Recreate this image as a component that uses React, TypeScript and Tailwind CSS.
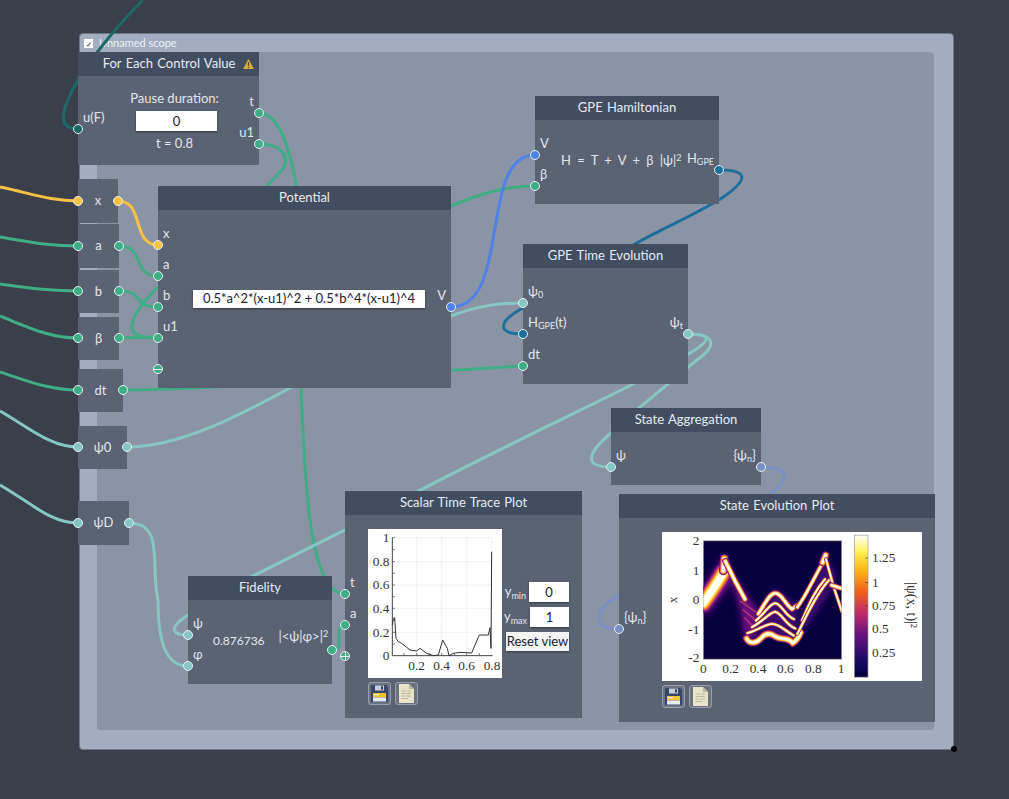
import type { ReactNode } from 'react'

const sans = "font-['Lato','Noto_Sans',sans-serif]"

const green = 'bg-[#3fae85]'
const teal = 'bg-[#84c7c3]'
const yellow = 'bg-[#f6c244]'
const blue = 'bg-[#4d82e8]'
const navy = 'bg-[#1d6f9e]'
const dark = 'bg-[#1c6a66]'
const lilac = 'bg-[#7a8fc8]'

const wires: { d: string; color: string }[] = [
  { color: '#1c6a66', d: 'M78 129 C62 129 60 118 68 100 C80 70 115 28 143 0' },
  { color: '#f6c244', d: 'M0 187 C30 193 50 201 78 201' },
  { color: '#f6c244', d: 'M118 201 C145 201 131 245 158 245' },
  { color: '#3fae85', d: 'M0 237 C30 242 50 246 78 246' },
  { color: '#3fae85', d: 'M0 284 C30 288 50 291 78 291' },
  { color: '#3fae85', d: 'M0 316 C30 328 50 338 78 338' },
  { color: '#3fae85', d: 'M0 372 C30 382 50 390 78 390' },
  { color: '#84c7c3', d: 'M0 411 C30 428 50 447 78 447' },
  { color: '#84c7c3', d: 'M0 485 C30 502 50 523 78 523' },
  { color: '#3fae85', d: 'M119 246 C146 246 131 276 158 276' },
  { color: '#3fae85', d: 'M119 291 C146 291 131 307 158 307' },
  { color: '#3fae85', d: 'M119 338 L158 337 L300 260 L451 206 C480 194 505 186 535 186' },
  { color: '#3fae85', d: 'M259 144 C280 144 292 156 282 170 L267 186 L157 288 C140 305 131 318 132 328 C133 336 145 338 158 338' },
  { color: '#3fae85', d: 'M259 113 C282 113 292 160 297 190 L301 388 C305 490 310 594 345 594' },
  { color: '#3fae85', d: 'M123 390 C230 390 400 372 523 366' },
  { color: '#84c7c3', d: 'M127 447 C180 447 240 415 290 388 L451 316 C480 305 500 303 523 303' },
  { color: '#4d82e8', d: 'M451 307 C512 307 478 155 535 155' },
  { color: '#1d6f9e', d: 'M719 170 C750 170 748 180 722 198 C700 212 660 230 635 244 L523 308 C497 322 497 334 523 334' },
  { color: '#84c7c3', d: 'M688 334 C712 334 712 340 690 353 C640 385 500 445 345 530 L253 576 L188 615 C165 630 175 635 188 635' },
  { color: '#84c7c3', d: 'M688 334 C715 334 718 345 697 360 C675 378 655 395 640 407 L611 433 C585 455 585 467 611 467' },
  { color: '#7a8fc8', d: 'M761 467 C790 467 790 480 770 494 L619 595 C592 612 592 629 619 629' },
  { color: '#84c7c3', d: 'M129 523 C165 523 150 566 158 600 C158 640 165 666 188 666' },
  { color: '#3fae85', d: 'M332 650 C342 650 338 644 339 635 C339 628 340 625 345 625' },
]

function Port({ className, label, right }: { className: string; label?: ReactNode; right?: boolean }) {
  return (
    <div className={`absolute z-20 h-[10px] w-[10px] -translate-x-1/2 -translate-y-1/2 rounded-full border border-[#e9eef2] ${className}`}>
      {label && (
        <span className={`absolute bottom-[8px] whitespace-nowrap text-[13px] leading-4 text-[#e2e6ec] ${right ? 'right-[9px]' : 'left-[9px]'}`}>
          {label}
        </span>
      )}
    </div>
  )
}

function Node({ className, title, children }: { className: string; title?: ReactNode; children?: ReactNode }) {
  return (
    <div className={`absolute z-10 flex flex-col bg-[#5b6373] text-[#e2e6ec] ${className}`}>
      {title && (
        <div className="flex h-[24px] shrink-0 items-center justify-center bg-[#424e60] text-[13px] text-[#e6eaf0] [word-spacing:1px]">
          {title}
        </div>
      )}
      {children}
    </div>
  )
}

function Sub({ children }: { children: ReactNode }) {
  return <sub className="text-[9px]">{children}</sub>
}

function SmallInput({ value, className }: { value: string; className: string }) {
  return (
    <input
      readOnly
      value={value}
      className={`bg-white text-center text-[13px] text-[#1c2130] shadow-[0_1px_2px_rgba(0,0,0,0.45)] outline-none ${className}`}
    />
  )
}

function IconButtons() {
  return (
    <div className="flex gap-[4px]">
      <div className="flex h-[23px] w-[23px] items-center justify-center rounded-[3px] border border-[#9a9fa8] bg-[#6a7181]">
        <svg width="17" height="17" viewBox="0 0 17 17">
          <path d="M0 0H15L17 2V17H0Z" fill="#39466b" />
          <rect x="4" y="0.5" width="9" height="5" fill="#c9d0dc" />
          <rect x="10" y="1.2" width="2" height="3.4" fill="#39466b" />
          <rect x="2" y="8" width="13" height="4.5" fill="#f2c232" />
          <rect x="3" y="9.2" width="5" height="1" fill="#fff" />
          <rect x="2" y="12.5" width="13" height="4" fill="#e8ebef" />
        </svg>
      </div>
      <div className="flex h-[23px] w-[23px] items-center justify-center rounded-[3px] border border-[#9a9fa8] bg-[#6a7181]">
        <svg width="15" height="19" viewBox="0 0 15 19">
          <path d="M0 0H10L15 5V19H0Z" fill="#e8e4c9" />
          <path d="M10 0L15 5H10Z" fill="#b7b49c" />
          <path d="M2.5 7H7M8 7H12M2.5 9.5H12M2.5 12H6M7 12H12M2.5 14.5H9" stroke="#a9a68f" strokeWidth="0.7" />
        </svg>
      </div>
    </div>
  )
}

function TracePlot() {
  const trace =
    '97,300 100,280 104,278 108,340 115,350 125,355 150,375 170,378 180,370 200,385 220,392 235,390 248,345 262,370 267,392 280,385 300,382 335,384 345,360 358,330 385,330 390,308 393,370 395,80'
  return (
    <svg width="134" height="149" viewBox="24 12 402 447" className="block bg-white">
      <g stroke="#c4c7cc" strokeWidth="2" strokeDasharray="2 4">
        {[170, 245, 320, 395].map((x) => <line key={x} x1={x} x2={x} y1="38" y2="392" />)}
        {[38, 110, 180, 250, 322].map((y) => <line key={y} x1="97" x2="395" y1={y} y2={y} />)}
      </g>
      <path d="M97 38V392H398" fill="none" stroke="#444" strokeWidth="3" />
      <g stroke="#444" strokeWidth="2">
        {[38, 74, 110, 145, 180, 215, 250, 286, 322, 357].map((y) => <line key={y} x1="97" x2="105" y1={y} y2={y} />)}
        {[132, 170, 208, 245, 283, 320, 358].map((x) => <line key={x} x1={x} x2={x} y1="392" y2="384" />)}
      </g>
      <polyline points={trace} fill="none" stroke="#333" strokeWidth="3" />
      <g fontFamily="'Liberation Serif', serif" fontSize="40" fill="#333" textAnchor="end">
        <text x="88" y="50">1</text>
        <text x="88" y="122">0.8</text>
        <text x="88" y="193">0.6</text>
        <text x="88" y="264">0.4</text>
        <text x="88" y="335">0.2</text>
        <text x="88" y="404">0</text>
      </g>
      <g fontFamily="'Liberation Serif', serif" fontSize="40" fill="#333" textAnchor="middle">
        <text x="170" y="436">0.2</text>
        <text x="245" y="436">0.4</text>
        <text x="320" y="436">0.6</text>
        <text x="396" y="436">0.8</text>
      </g>
    </svg>
  )
}

// one ridge of the density plot, coloured from purple rim to white core
function Band({ d, w }: { d: string; w: number }) {
  return (
    <g fill="none" strokeLinecap="round" strokeLinejoin="round">
      <path d={d} stroke="#6a1180" strokeWidth={w * 1.9} />
      <path d={d} stroke="#d0406a" strokeWidth={w * 1.55} />
      <path d={d} stroke="#f98a1c" strokeWidth={w * 1.25} />
      <path d={d} stroke="#fde048" strokeWidth={w} />
      <path d={d} stroke="#fffff4" strokeWidth={w * 0.68} />
    </g>
  )
}

function EvolutionPlot() {
  return (
    <svg width="260" height="149" viewBox="186 129 780 446" className="block bg-white">
      <defs>
        <linearGradient id="inferno" x1="0" y1="1" x2="0" y2="0">
          <stop offset="0" stopColor="#03003f" />
          <stop offset="0.12" stopColor="#1a0a66" />
          <stop offset="0.3" stopColor="#6a1180" />
          <stop offset="0.45" stopColor="#c02a6a" />
          <stop offset="0.6" stopColor="#f2601c" />
          <stop offset="0.75" stopColor="#fbb416" />
          <stop offset="0.88" stopColor="#fdf050" />
          <stop offset="1" stopColor="#ffffff" />
        </linearGradient>
        <clipPath id="heat-clip">
          <rect x="40" y="35" width="415" height="355" />
        </clipPath>
        <filter id="soft">
          <feGaussianBlur stdDeviation="1.6" />
        </filter>
        <filter id="haze">
          <feGaussianBlur stdDeviation="9" />
        </filter>
      </defs>
      <rect x="310" y="155" width="415" height="355" fill="#07003f" stroke="#9a9a9a" strokeWidth="2" />
      <g transform="translate(270 120)" clipPath="url(#heat-clip)">
        <g filter="url(#haze)">
          <path d="M115 120 L205 245 L200 325 L165 335 L150 240 Z" fill="#6a1180" />
          <path d="M40 170 L100 75 L135 150 L60 250 L40 260 Z" fill="#6a1180" opacity="0.8" />
          <path d="M195 300 L255 175 L325 230 L310 335 Z" fill="#3c0c70" />
          <path d="M325 290 L405 70 L440 140 L420 190 L345 300 Z" fill="#3c0c70" />
        </g>
        <g filter="url(#soft)">
          <Band d="M40 222 C55 200 78 170 100 130" w={30} />
          <Band d="M100 125 L103 88" w={14} />
          <Band d="M106 96 L135 155 L165 210" w={10} />
          <path d="M150 215 L202 252 M158 240 L196 272 M163 265 L188 290" stroke="#d0406a" strokeWidth="5" fill="none" opacity="0.7" />
          <Band d="M205 254 C225 225 238 192 256 192 C275 192 285 225 306 240 L325 226" w={9} />
          <Band d="M198 274 C225 252 240 222 256 222 C275 224 285 260 312 270" w={6} />
          <Band d="M186 294 C220 276 240 248 256 248 C275 252 288 288 316 298" w={6} />
          <Band d="M172 312 C205 302 225 286 245 284 C270 284 285 306 316 322" w={6} />
          <Band d="M170 328 C178 345 198 344 214 326 C226 312 240 310 256 322 C276 334 296 322 308 342 C318 336 326 326 332 310" w={12} />
          <Band d="M322 234 C345 205 370 150 400 98" w={8} />
          <Band d="M398 100 L407 78" w={12} />
          <Band d="M336 274 C355 232 370 190 405 150" w={6} />
          <Band d="M322 314 C345 272 375 197 418 152" w={6} />
          <Band d="M408 90 L430 170 L456 248" w={6} />
          <Band d="M425 168 L456 178" w={9} />
        </g>
      </g>
      <rect x="763" y="138" width="41" height="426" fill="url(#inferno)" stroke="#9a9a9a" strokeWidth="2" />
      <g stroke="#333" strokeWidth="2">
        {[207, 280, 350, 418, 490].map((y) => <line key={y} x1="796" x2="804" y1={y} y2={y} />)}
      </g>
      <g fontFamily="'Liberation Serif', serif" fontSize="40" fill="#333" textAnchor="end">
        <text x="298" y="168">2</text>
        <text x="298" y="257">1</text>
        <text x="298" y="344">0</text>
        <text x="298" y="434">-1</text>
        <text x="298" y="520">-2</text>
      </g>
      <g fontFamily="'Liberation Serif', serif" fontSize="40" fill="#333" textAnchor="middle">
        <text x="310" y="552">0</text>
        <text x="392" y="552">0.2</text>
        <text x="474" y="552">0.4</text>
        <text x="556" y="552">0.6</text>
        <text x="640" y="552">0.8</text>
        <text x="723" y="552">1</text>
      </g>
      <g fontFamily="'Liberation Serif', serif" fontSize="40" fill="#333">
        <text x="816" y="220">1.25</text>
        <text x="816" y="293">1</text>
        <text x="816" y="363">0.75</text>
        <text x="816" y="431">0.5</text>
        <text x="816" y="503">0.25</text>
      </g>
      <text x="222" y="332" transform="rotate(-90 222 332)" textAnchor="middle" dominantBaseline="middle" fontFamily="'Liberation Serif', serif" fontSize="38" fill="#333">x</text>
      <text x="930" y="348" transform="rotate(90 930 348)" textAnchor="middle" dominantBaseline="middle" fontFamily="'Liberation Serif', serif" fontSize="42" fill="#333">|ψ(x, t)|²</text>
    </svg>
  )
}

export default function App() {
  return (
    <div className={`relative h-[799px] w-[1009px] overflow-hidden bg-[#3a3f49] ${sans}`}>
      {/* scope frame */}
      <div className="absolute left-[79px] top-[33px] flex h-[717px] w-[875px] flex-col rounded-[4px] border border-[#6f7889] bg-[#a2adc0] pb-[19px] pl-[17px] pr-[19px]">
        <div className="-ml-[17px] flex h-[18px] shrink-0 items-center gap-[6px] pl-[4px] text-[11px] text-[#eef1f5]">
          <span className="flex h-[9px] w-[9px] items-end justify-end bg-white pr-[1px] text-[7px] leading-none text-black">✓</span>
          Unnamed scope
        </div>
        <div className="flex-1 rounded-[4px] bg-[#8b94a4]" />
      </div>

      {/* wires */}
      <svg className="absolute left-0 top-0 z-[5]" width="1009" height="799" fill="none" strokeWidth="3">
        {wires.map((w, i) => (
          <path key={i} d={w.d} stroke={w.color} />
        ))}
      </svg>

      {/* nodes */}
      <Node
        className="left-[78px] top-[52px] h-[113px] w-[181px]"
        title={
          <span className="flex items-center gap-[8px] pl-[20px]">
            For Each Control Value
            <svg width="11" height="10" viewBox="0 0 11 10">
              <path d="M5.5 0L11 10H0Z" fill="#d9a93a" />
              <path d="M5.5 3V7M5.5 8V9" stroke="#4a4a3a" strokeWidth="1.2" />
            </svg>
          </span>
        }
      >
        <div className="flex flex-1 flex-col items-center pl-[20px] pr-[4px] pt-[13px] text-[13px]">
          <span className="-ml-[4px] leading-[18px]">Pause duration:</span>
          <SmallInput value="0" className="mt-[4px] h-[20px] w-[81px]" />
          <span className="-ml-[4px] mt-[3px] leading-[18px]">t = 0.8</span>
        </div>
      </Node>

      <Node className="left-[78px] top-[179px] flex h-[44px] w-[40px] items-center justify-center text-[13px]">x</Node>
      <Node className="left-[78px] top-[224px] flex h-[44px] w-[41px] items-center justify-center text-[13px]">a</Node>
      <Node className="left-[78px] top-[270px] flex h-[43px] w-[41px] items-center justify-center text-[13px]">b</Node>
      <Node className="left-[78px] top-[317px] flex h-[43px] w-[41px] items-center justify-center text-[13px]">β</Node>
      <Node className="left-[78px] top-[369px] flex h-[43px] w-[45px] items-center justify-center text-[13px]">dt</Node>
      <Node className="left-[78px] top-[426px] flex h-[43px] w-[49px] items-center justify-center text-[13px]">ψ0</Node>
      <Node className="left-[78px] top-[501px] flex h-[44px] w-[51px] items-center justify-center text-[13px]">ψD</Node>

      <Node className="left-[158px] top-[186px] h-[202px] w-[293px]" title="Potential">
        <div className="flex flex-1 items-start justify-center pl-[9px] pt-[80px]">
          <input
            readOnly
            value="0.5*a^2*(x-u1)^2 + 0.5*b^4*(x-u1)^4"
            className="h-[18px] w-[232px] bg-white text-center text-[13px] text-[#1c2130] shadow-[0_1px_2px_rgba(0,0,0,0.45)] outline-none"
          />
        </div>
      </Node>

      <Node className="left-[535px] top-[96px] h-[108px] w-[184px]" title="GPE Hamiltonian">
        <div className="pl-[26px] pt-[31px] text-[13px] leading-[18px] [word-spacing:3px]">
          H = T + V + β |ψ|<sup className="text-[9px]">2</sup>
        </div>
      </Node>

      <Node className="left-[523px] top-[244px] h-[140px] w-[165px]" title="GPE Time Evolution" />

      <Node className="left-[611px] top-[408px] h-[77px] w-[150px]" title="State Aggregation" />

      <Node className="left-[188px] top-[576px] h-[108px] w-[144px]" title="Fidelity">
        <div className="flex items-start gap-[14px] whitespace-nowrap pl-[25px] pt-[30px] text-[12px] leading-[18px]">
          <span className="pt-[2px]">0.876736</span>
          <span className="-mt-[3px] text-[13px]">|&lt;ψ|φ&gt;|<sup className="text-[9px]">2</sup></span>
        </div>
      </Node>

      <Node className="left-[345px] top-[491px] h-[227px] w-[237px]" title="Scalar Time Trace Plot">
        <div className="flex gap-[2px] pl-[23px] pt-[14px]">
          <div className="flex flex-col gap-[4px]">
            <TracePlot />
            <IconButtons />
          </div>
          <div className="flex flex-col items-end gap-[5px] pt-[53px] text-[13px]">
            <div className="flex items-center gap-[3px]">
              <span>y<Sub>min</Sub></span>
              <SmallInput value="0" className="h-[20px] w-[40px]" />
            </div>
            <div className="flex items-center gap-[3px]">
              <span>y<Sub>max</Sub></span>
              <SmallInput value="1" className="h-[20px] w-[39px]" />
            </div>
            <button className="h-[19px] w-[63px] whitespace-nowrap bg-[#f4f4f4] text-[13px] leading-none text-[#1c2130] shadow-[0_1px_2px_rgba(0,0,0,0.45)]">
              Reset view
            </button>
          </div>
        </div>
      </Node>

      <Node className="left-[619px] top-[494px] h-[228px] w-[316px]" title="State Evolution Plot">
        <div className="flex flex-col gap-[4px] pl-[43px] pt-[14px]">
          <EvolutionPlot />
          <IconButtons />
        </div>
      </Node>

      {/* ports */}
      <Port className={`left-[78px] top-[129px] ${dark}`} label="u(F)" />
      <Port className={`left-[259px] top-[113px] ${green}`} label="t" right />
      <Port className={`left-[259px] top-[144px] ${green}`} label="u1" right />
      <Port className={`left-[78px] top-[201px] ${yellow}`} />
      <Port className={`left-[118px] top-[201px] ${yellow}`} />
      <Port className={`left-[78px] top-[246px] ${green}`} />
      <Port className={`left-[119px] top-[246px] ${green}`} />
      <Port className={`left-[78px] top-[291px] ${green}`} />
      <Port className={`left-[119px] top-[291px] ${green}`} />
      <Port className={`left-[78px] top-[338px] ${green}`} />
      <Port className={`left-[119px] top-[338px] ${green}`} />
      <Port className={`left-[78px] top-[390px] ${green}`} />
      <Port className={`left-[123px] top-[390px] ${green}`} />
      <Port className={`left-[78px] top-[447px] ${teal}`} />
      <Port className={`left-[127px] top-[447px] ${teal}`} />
      <Port className={`left-[78px] top-[523px] ${teal}`} />
      <Port className={`left-[129px] top-[523px] ${teal}`} />
      <Port className={`left-[158px] top-[245px] ${yellow}`} label="x" />
      <Port className={`left-[158px] top-[276px] ${green}`} label="a" />
      <Port className={`left-[158px] top-[307px] ${green}`} label="b" />
      <Port className={`left-[158px] top-[338px] ${green}`} label="u1" />
      <div className={`absolute left-[158px] top-[369px] z-20 flex h-[10px] w-[10px] -translate-x-1/2 -translate-y-1/2 items-center justify-center rounded-full border border-[#e9eef2] ${green}`}>
        <span className="h-px w-full bg-[#e9eef2]" />
      </div>
      <Port className={`left-[451px] top-[307px] ${blue}`} label="V" right />
      <Port className={`left-[535px] top-[155px] ${blue}`} label="V" />
      <Port className={`left-[535px] top-[186px] ${green}`} label="β" />
      <Port className={`left-[719px] top-[170px] ${navy}`} label={<>H<Sub>GPE</Sub></>} right />
      <Port className={`left-[523px] top-[303px] ${teal}`} label={<>ψ<Sub>0</Sub></>} />
      <Port className={`left-[523px] top-[334px] ${navy}`} label={<>H<Sub>GPE</Sub>(t)</>} />
      <Port className={`left-[523px] top-[366px] ${green}`} label="dt" />
      <Port className={`left-[688px] top-[334px] ${teal}`} label={<>ψ<Sub>t</Sub></>} right />
      <Port className={`left-[611px] top-[467px] ${teal}`} label="ψ" />
      <Port className={`left-[761px] top-[467px] ${lilac}`} label={<>{'{'}ψ<Sub>n</Sub>{'}'}</>} right />
      <Port className={`left-[188px] top-[635px] ${teal}`} label="ψ" />
      <Port className={`left-[188px] top-[666px] ${teal}`} label="φ" />
      <Port className={`left-[332px] top-[650px] ${green}`} />
      <Port className={`left-[345px] top-[594px] ${green}`} label="t" />
      <Port className={`left-[345px] top-[625px] ${green}`} label="a" />
      <div className={`absolute left-[345px] top-[656px] z-20 flex h-[10px] w-[10px] -translate-x-1/2 -translate-y-1/2 items-center justify-center rounded-full border border-[#e9eef2] ${green}`}>
        <span className="absolute h-px w-full bg-[#e9eef2]" />
        <span className="absolute h-full w-px bg-[#e9eef2]" />
      </div>
      <Port className={`left-[619px] top-[629px] ${lilac}`} label={<>{'{'}ψ<Sub>n</Sub>{'}'}</>} />

      {/* resize handle */}
      <div className="absolute left-[951px] top-[746px] z-20 h-[6px] w-[6px] rounded-full bg-black" />
    </div>
  )
}
